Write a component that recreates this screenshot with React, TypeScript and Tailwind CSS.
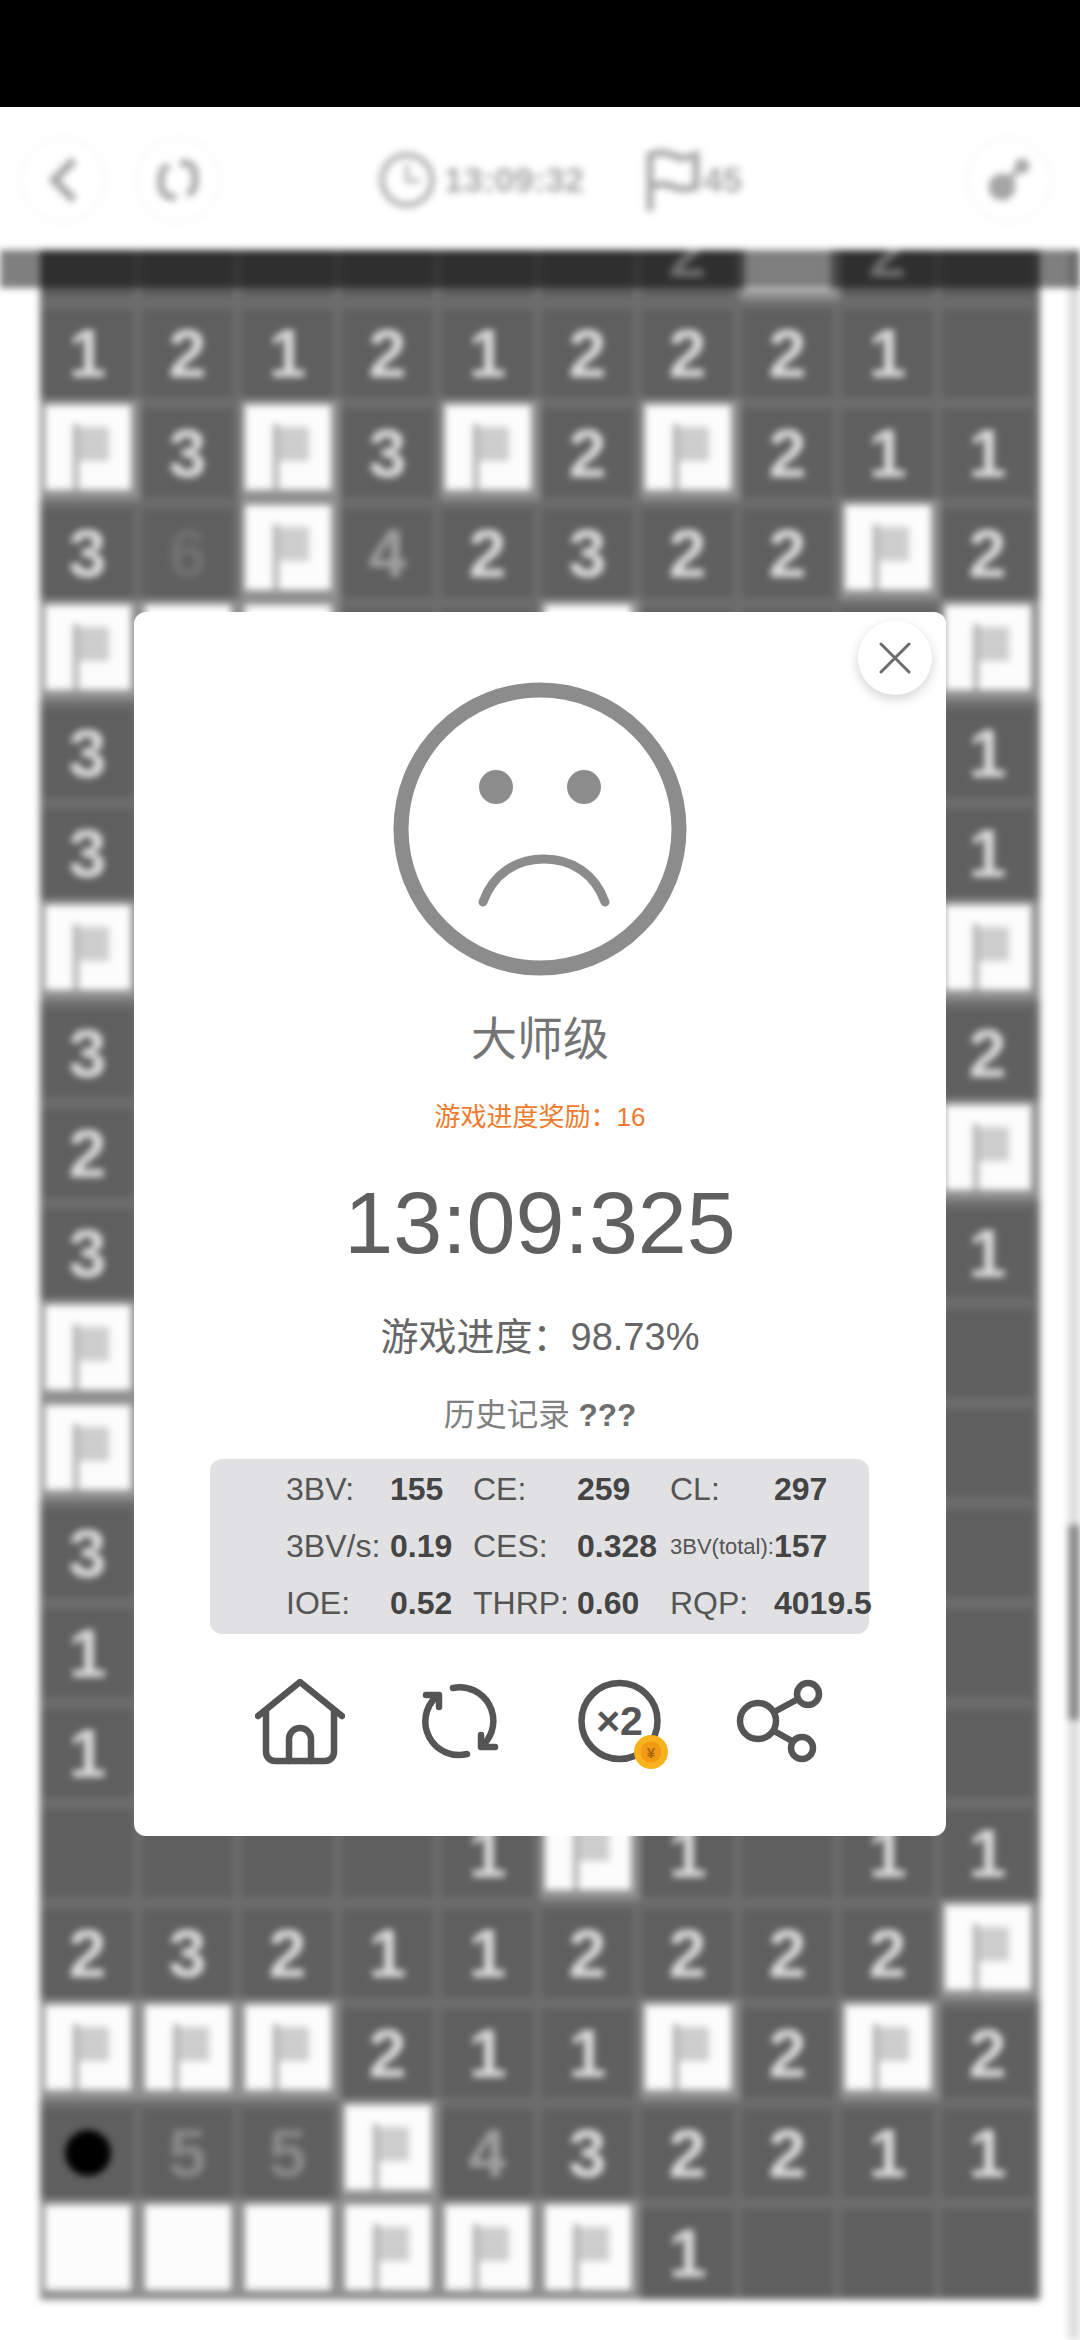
const rows: string[][] = [
  ["", "", "", "", "", "", "2", "W", "2", ""],
  ["1", "2", "1", "2", "1", "2", "2", "2", "1", ""],
  ["F", "3", "F", "3", "F", "2", "F", "2", "1", "1"],
  ["3", "6", "F", "4", "2", "3", "2", "2", "F", "2"],
  ["F", "F", "F", "", "", "F", "", "", "", "F"],
  ["3", "", "", "", "", "", "", "", "", "1"],
  ["3", "", "", "", "", "", "", "", "", "1"],
  ["F", "", "", "", "", "", "", "", "", "F"],
  ["3", "", "", "", "", "", "", "", "", "2"],
  ["2", "", "", "", "", "", "", "", "", "F"],
  ["3", "", "", "", "", "", "", "", "", "1"],
  ["F", "", "", "", "", "", "", "", "", ""],
  ["F", "", "", "", "", "", "", "", "", ""],
  ["3", "", "", "", "", "", "", "", "", ""],
  ["1", "", "", "", "", "", "", "", "", ""],
  ["1", "", "", "", "", "", "", "", "", ""],
  ["", "", "", "", "1", "F", "1", "", "1", "1"],
  ["2", "3", "2", "1", "1", "2", "2", "2", "2", "F"],
  ["F", "F", "F", "2", "1", "1", "F", "2", "F", "2"],
  ["M", "5", "5", "F", "4", "3", "2", "2", "1", "1"],
  ["W", "W", "W", "F", "F", "F", "1", "", "", ""],
];

const digitColor: Record<string, string> = {
  "1": "text-[#dcdcdc]",
  "2": "text-[#dcdcdc]",
  "3": "text-[#dcdcdc]",
  "4": "text-[#a0a0a0]",
  "5": "text-[#8a8a8a]",
  "6": "text-[#727272]",
};

function Cell({ value }: { value: string }) {
  if (value === "F" || value === "W") {
    return (
      <div className="h-[100px] bg-[#8f8f8f] pl-[5px] pr-[9px] pt-[5px] pb-[10px]">
        <div className="h-full bg-[#fcfcfc] pl-[28px] pt-[19px]">
          {value === "F" && (
            <svg width="40" height="66" viewBox="0 0 40 66" className="block">
              <rect x="0" y="0" width="6" height="66" fill="#b4b4b4" />
              <rect x="6" y="3" width="30" height="34" fill="#cdcdcd" />
            </svg>
          )}
        </div>
      </div>
    );
  }
  return (
    <div className="h-[100px] bg-[#6d6d6d] pl-[2px] pr-[7px] pt-[9px] pb-[3px]">
      <div className="flex h-full items-center justify-center bg-[#5f5f5f]">
        {value === "M" ? (
          <div className="size-[46px] rounded-full bg-black" />
        ) : (
          <span className={`text-[68px] leading-none font-bold ${digitColor[value] ?? ""}`}>{value}</span>
        )}
      </div>
    </div>
  );
}

function Header() {
  return (
    <div className="flex h-[143px] items-center bg-white pt-[3px]">
      <div className="ml-[23px] flex size-[80px] items-center justify-center rounded-full shadow-[0_0_8px_rgba(0,0,0,0.06)]">
        <svg width="34" height="50" viewBox="0 0 34 50" fill="none" stroke="#a5a5a5" strokeWidth="8">
          <path d="M28 5 8 25l20 20" />
        </svg>
      </div>
      <div className="ml-[35px] flex size-[80px] items-center justify-center rounded-full shadow-[0_0_8px_rgba(0,0,0,0.06)]">
        <svg width="44" height="44" viewBox="0 0 44 44" fill="none" stroke="#a5a5a5" strokeWidth="7">
          <path d="M24 5h4a11 11 0 0 1 11 11v10a11 11 0 0 1-8 10" />
          <path d="M20 39h-4A11 11 0 0 1 5 28V18A11 11 0 0 1 13 8" />
        </svg>
      </div>
      <svg width="60" height="60" viewBox="0 0 60 60" fill="none" stroke="#b5b5b5" strokeWidth="6" className="ml-[159px]">
        <circle cx="30" cy="30" r="25" />
        <path d="M30 14v17h13" strokeWidth="4" />
      </svg>
      <span className="ml-[7px] text-[35px] font-bold text-[#a8a8a8]">13:09:32</span>
      <svg width="56" height="62" viewBox="0 0 56 62" fill="none" stroke="#a8a8a8" strokeWidth="7" className="ml-[60px]">
        <path d="M6 62V6c12-4 18-2 24 1s14 2 22-1v32c-10 3-16 3-22 0S16 34 6 38" />
      </svg>
      <span className="ml-[3px] text-[35px] font-bold text-[#a8a8a8]">45</span>
      <div className="ml-[227px] flex size-[80px] items-center justify-center rounded-full shadow-[0_0_8px_rgba(0,0,0,0.06)]">
        <svg width="50" height="50" viewBox="0 0 50 50" fill="#a5a5a5" stroke="#a5a5a5">
          <circle cx="18" cy="32" r="13" />
          <circle cx="38" cy="11" r="7" />
          <path d="M24 26 36 13" strokeWidth="5" />
        </svg>
      </div>
    </div>
  );
}

function Board() {
  return (
    <div className="relative flex h-[2090px] overflow-hidden bg-white">
      <div className="ml-[40px] -mt-[50px] w-[1000px] self-start">
        {rows.map((row, r) => (
          <div key={r} className="grid grid-cols-10">
            {row.map((value, c) => (
              <Cell key={c} value={value} />
            ))}
          </div>
        ))}
      </div>
      <div className="ml-[28px] h-full w-[12px] bg-[#dedede] pt-[1275px]">
        <div className="h-[195px] bg-[#8a8a8a]" />
      </div>
      <div className="absolute inset-x-0 top-0 h-[38px] bg-black/50" />
    </div>
  );
}

const stats = [
  ["3BV:", "155", "CE:", "259", "CL:", "297"],
  ["3BV/s:", "0.19", "CES:", "0.328", "3BV(total):", "157"],
  ["IOE:", "0.52", "THRP:", "0.60", "RQP:", "4019.5"],
];

function Modal() {
  return (
    <div className="absolute left-[134px] top-[612px] h-[1224px] w-[812px] rounded-[12px] bg-white text-center">
      <button className="absolute left-[724px] top-[9px] flex size-[74px] items-center justify-center rounded-full bg-white shadow-[0_4px_12px_rgba(0,0,0,0.18)]">
        <svg width="32" height="32" viewBox="0 0 32 32" fill="none" stroke="#6b6b6b" strokeWidth="3" strokeLinecap="round">
          <path d="M2 2 30 30M30 2 2 30" />
        </svg>
      </button>

      <svg width="296" height="296" viewBox="0 0 296 296" fill="none" className="mx-auto mt-[69px] block">
        <circle cx="148" cy="148" r="139" stroke="#8c8c8c" strokeWidth="15" />
        <circle cx="104" cy="106" r="17" fill="#8c8c8c" />
        <circle cx="192" cy="106" r="17" fill="#8c8c8c" />
        <path d="M91 221c10-28 33-43 61-43s51 15 61 43" stroke="#8c8c8c" strokeWidth="9" strokeLinecap="round" />
      </svg>

      <div className="mt-[32px] h-[60px] text-[46px] leading-[60px] text-[#757575]">大师级</div>
      <div className="mt-[28px] h-[40px] text-[26px] leading-[40px] text-[#f07a2c]">游戏进度奖励：16</div>
      <div className="mt-[36px] h-[100px] text-[88px] leading-[100px] text-[#606060]">13:09:325</div>
      <div className="mt-[39px] h-[50px] text-[38px] leading-[50px] text-[#666666]">游戏进度：98.73%</div>
      <div className="mt-[31px] h-[44px] text-[31.5px] leading-[44px] text-[#808080]">
        历史记录 <span className="font-bold text-[#6e6e6e]">???</span>
      </div>

      <div className="mx-[76px] mt-[22px] grid h-[175px] w-[659px] grid-cols-[104px_83px_104px_93px_104px_1fr] content-center rounded-[12px] bg-[#e1e1e3] pl-[76px] text-left text-[32px] leading-[57px]">
        {stats.flat().map((text, i) => (
          <span
            key={i}
            className={
              i % 2 === 1
                ? "whitespace-nowrap font-bold text-[#444444]"
                : text === "3BV(total):"
                  ? "whitespace-nowrap text-[22px] text-[#555555]"
                  : "whitespace-nowrap text-[#555555]"
            }
          >
            {text}
          </span>
        ))}
      </div>

      <div className="mt-[45px] flex justify-center gap-[70px]">
        <svg width="90" height="90" viewBox="0 0 90 90" fill="none" stroke="#555555" strokeWidth="6.5" strokeLinecap="round" strokeLinejoin="round">
          <path d="M3 37 45 3l42 34" />
          <path d="M11 32v41a9 9 0 0 0 9 9h50a9 9 0 0 0 9-9V32" />
          <path d="M34 82V60a11 11 0 0 1 22 0v22" />
        </svg>
        <svg width="90" height="90" viewBox="0 0 90 90" fill="none" stroke="#555555" strokeWidth="6.5" strokeLinecap="round" strokeLinejoin="round">
          <path d="M38 9A33.5 33.5 0 0 1 68 66" />
          <path d="M52 75A33.5 33.5 0 0 1 21 18" />
          <path d="M11 16h13v12" />
          <path d="M66 56v12h14" />
        </svg>
        <svg width="90" height="90" viewBox="0 0 90 90" fill="none" className="overflow-visible">
          <circle cx="44.5" cy="42" r="38" stroke="#555555" strokeWidth="6.5" />
          <text x="44.5" y="56" textAnchor="middle" fontSize="41" fontWeight="700" fill="#555555" stroke="none">
            ×2
          </text>
          <circle cx="76" cy="73" r="17" fill="#f7b21d" />
          <circle cx="76" cy="73" r="10.5" fill="#f29a12" />
          <text x="76" y="79" textAnchor="middle" fontSize="15" fontWeight="700" fill="#a8660a">
            ¥
          </text>
        </svg>
        <svg width="90" height="90" viewBox="0 0 90 90" fill="none" stroke="#555555" strokeWidth="6.5">
          <circle cx="23" cy="42" r="18" />
          <circle cx="73" cy="15" r="11" />
          <circle cx="67" cy="69" r="11" />
          <path d="M39 33 63 20M39 52 57 62" />
        </svg>
      </div>
    </div>
  );
}

export default function App() {
  return (
    <div className="relative h-[2340px] w-[1080px] overflow-hidden bg-white [font-family:'Liberation_Sans','Noto_Sans_CJK_SC',sans-serif]">
      <div className="relative z-10 h-[107px] bg-black" />
      <div className="blur-[3.5px]">
        <Header />
        <Board />
      </div>
      <Modal />
    </div>
  );
}
